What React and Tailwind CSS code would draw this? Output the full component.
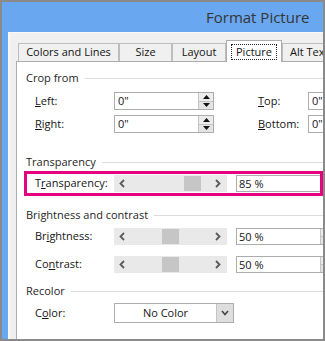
import React from 'react';

function Chevron({ dir }) {
  const pts = dir === 'left' ? '5,1 1.5,4.5 5,8' : '1,1 4.5,4.5 1,8';
  return (
    <svg width="7" height="9" viewBox="0 0 7 9" className="shrink-0">
      <polyline points={pts} fill="none" stroke="#5a5a5a" strokeWidth="1.8" />
    </svg>
  );
}

function Spin() {
  return (
    <div className="w-[15px] h-full flex flex-col border-l border-[#c4c4c4]">
      <div className="flex-1 bg-[#ececec] border-b border-[#c4c4c4] flex items-center justify-center">
        <svg width="7" height="4" viewBox="0 0 7 4"><polygon points="0,4 3.5,0 7,4" fill="#111" /></svg>
      </div>
      <div className="flex-1 bg-[#e4e4e4] flex items-center justify-center">
        <svg width="7" height="4" viewBox="0 0 7 4"><polygon points="0,0 7,0 3.5,4" fill="#111" /></svg>
      </div>
    </div>
  );
}

function CropInput() {
  return (
    <div className="w-[100px] h-[18px] border border-[#adadad] bg-white flex shrink-0">
      <span className="flex-1 pl-[3px] leading-[16px]">0"</span>
      <Spin />
    </div>
  );
}

function Slider({ thumb }) {
  return (
    <div className="relative w-[113px] h-[17px] bg-[#e9e9e9] flex items-center justify-between px-[5px] shrink-0">
      <Chevron dir="left" />
      <div className="absolute top-[1px] w-[17px] h-[15px] bg-[#c6c6c6]" style={{ left: thumb }} />
      <Chevron dir="right" />
    </div>
  );
}

function Percent({ value }) {
  return (
    <div className="ml-[9px] w-[100px] h-[17px] border border-[#adadad] bg-white flex shrink-0">
      <span className="w-[84px] pl-[2px] leading-[15px]">{value}</span>
      <div className="w-[15px] h-full flex flex-col border-l border-[#c4c4c4]">
        <div className="flex-1 bg-[#ececec] border-b border-[#c4c4c4]" />
        <div className="flex-1 bg-[#e4e4e4]" />
      </div>
    </div>
  );
}

function Header({ children, className = '' }) {
  return (
    <div className={`h-[14px] flex items-center gap-[6px] mr-[90px] ${className}`}>
      <span className="text-[#262626]">{children}</span>
      <div className="flex-1 h-px bg-[#dcdcdc]" />
    </div>
  );
}

function Label({ children }) {
  return <div className="w-[88px] pl-[9px] shrink-0 whitespace-nowrap">{children}</div>;
}

function SliderRow({ label, thumb, value, className = '' }) {
  return (
    <div className={`h-[19px] flex items-center ${className}`}>
      <Label>{label}</Label>
      <Slider thumb={thumb} />
      <Percent value={value} />
    </div>
  );
}

export default function App() {
  const tabs = [
    { name: 'Colors and Lines', w: 'w-[101px]' },
    { name: 'Size', w: 'w-[53px]' },
    { name: 'Layout', w: 'w-[54px]' },
  ];
  return (
    <div className="w-[325px] h-[341px] overflow-hidden border-2 border-[#8a8a8a] bg-[#69a7f0] flex flex-col font-['Open_Sans',sans-serif] text-[11px] text-[#151515]">
      <div className="h-[30px] shrink-0 pl-[204px] flex items-center text-[15px] text-[#353535]">Format Picture</div>
      <div className="flex-1 min-h-0 pl-[6px] flex">
        <div className="flex-1 min-w-0 bg-[#f0f0f0] border-l-2 border-t border-[#f9f9f9] pl-[6px] pt-[7px] flex flex-col">
          <div className="flex items-end h-[22px] -mb-px relative z-10 pl-[2px] w-[400px] shrink-0">
            {tabs.map((t) => (
              <div key={t.name} className={`${t.w} h-[18px] mb-px border border-b-0 border-[#bdbdbd] bg-[#f0f0f0] flex items-center justify-center`}>
                {t.name}
              </div>
            ))}
            <div className="w-[56px] h-[22px] border border-b-0 border-[#adadad] bg-white flex items-center justify-center">
              <span className="border border-dotted border-[#222] px-[4px] leading-[14px]">Picture</span>
            </div>
            <div className="w-[70px] h-[18px] mb-px border border-b-0 border-[#bdbdbd] bg-[#f0f0f0] flex items-center pl-[7px]">
              Alt Text
            </div>
          </div>
          <div className="flex-1 w-[400px] bg-white border-l border-t border-[#adadad] pl-[9px] pt-[9px] flex flex-col">
            <Header>Crop from</Header>
            <div className="mt-[7px] h-[18px] flex items-center">
              <Label><span className="underline">L</span>eft:</Label>
              <CropInput />
              <div className="ml-[44px] w-[50px]"><span className="underline">T</span>op:</div>
              <CropInput />
            </div>
            <div className="mt-[5px] h-[18px] flex items-center">
              <Label><span className="underline">R</span>ight:</Label>
              <CropInput />
              <div className="ml-[44px] w-[50px]"><span className="underline">B</span>ottom:</div>
              <CropInput />
            </div>

            <Header className="mt-[22px]">Transparency</Header>
            <div className="relative mt-[5px]">
              <SliderRow label={<>T<span className="underline">r</span>ansparency:</>} thumb={70} value="85 %" />
              <div className="absolute -top-[3px] -bottom-[3px] -left-[2px] w-[299px] border-[3px] border-[#e5007d] pointer-events-none" />
            </div>

            <Header className="mt-[15px]">Brightness and contrast</Header>
            <SliderRow className="mt-[5px]" label={<>Br<span className="underline">i</span>ghtness:</>} thumb={48} value="50 %" />
            <SliderRow className="mt-[9px]" label={<>Co<span className="underline">n</span>trast:</>} thumb={48} value="50 %" />

            <Header className="mt-[10px]">Recolor</Header>
            <div className="mt-[5px] h-[20px] flex items-center">
              <Label>C<span className="underline">o</span>lor:</Label>
              <div className="w-[120px] h-[20px] border border-[#adadad] bg-white flex">
                <span className="flex-1 text-center leading-[18px]">No Color</span>
                <div className="w-[17px] h-full bg-[#dedede] border-l border-[#c4c4c4] flex items-center justify-center">
                  <svg width="8" height="6" viewBox="0 0 8 6"><polyline points="1,1 4,4.5 7,1" fill="none" stroke="#444" strokeWidth="1.6" /></svg>
                </div>
              </div>
            </div>
          </div>
        </div>
      </div>
    </div>
  );
}
